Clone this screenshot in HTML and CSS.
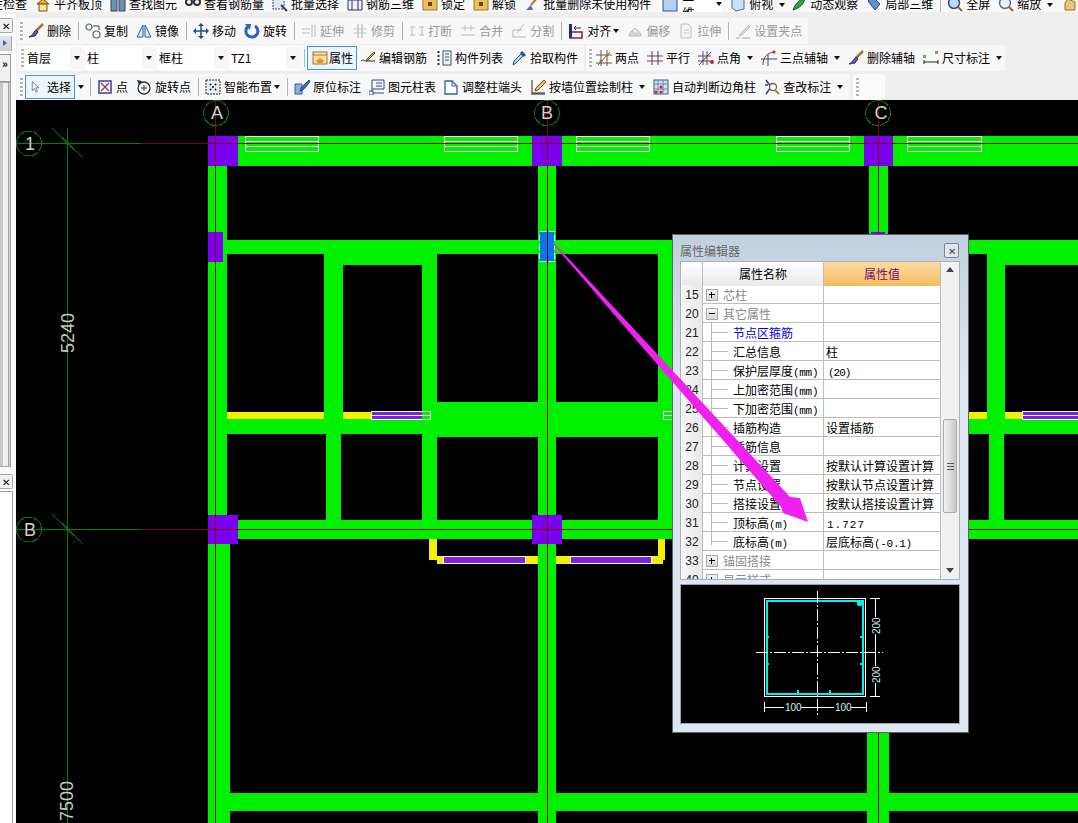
FILE: index.html
```html
<!DOCTYPE html>
<html lang="zh">
<head>
<meta charset="utf-8">
<title>属性编辑器</title>
<link rel="stylesheet" href="styles.css">
</head>
<body>
<div class="page">
  <div class="tb-top">
    <div class="btn first"><span>合法性检查</span></div>
    <div class="btn"><svg class="ico" viewBox="0 0 16 16"><path d="M2 8l6-5 6 5z" fill="#e8b030" stroke="#805000"/><rect x="4" y="8" width="8" height="7" fill="#f5e6a0" stroke="#805000"/></svg><span>平齐板顶</span></div>
    <div class="btn"><svg class="ico" viewBox="0 0 16 16"><rect x="1" y="2" width="6" height="13" fill="#7090b0" stroke="#345"/><rect x="9" y="2" width="6" height="13" fill="#7090b0" stroke="#345"/></svg><span>查找图元</span></div>
    <div class="btn"><svg class="ico" viewBox="0 0 16 16"><circle cx="4" cy="6" r="3" fill="none" stroke="#333" stroke-width="2"/><circle cx="12" cy="6" r="3" fill="none" stroke="#333" stroke-width="2"/></svg><span>查看钢筋量</span></div>
    <div class="btn"><svg class="ico" viewBox="0 0 16 16"><rect x="1" y="1" width="11" height="12" fill="#dde8f5" stroke="#345" stroke-dasharray="2 1"/><path d="M9 9l6 6" stroke="#345" stroke-width="2"/></svg><span>批量选择</span></div>
    <div class="btn"><svg class="ico" viewBox="0 0 16 16"><path d="M1 4h14v10H1zM5 4v10M11 4v10" fill="#eef" stroke="#335"/></svg><span>钢筋三维</span></div>
    <div class="btn"><svg class="ico" viewBox="0 0 16 16"><rect x="1" y="2" width="14" height="12" fill="#e8c060" stroke="#a07820"/><rect x="6" y="6" width="4" height="4" fill="#704000"/></svg><span>锁定</span></div>
    <div class="btn"><svg class="ico" viewBox="0 0 16 16"><rect x="1" y="2" width="14" height="12" fill="#e8c060" stroke="#a07820"/><rect x="6" y="6" width="4" height="4" fill="#704000"/></svg><span>解锁</span></div>
    <div class="btn"><svg class="ico" viewBox="0 0 16 16"><path d="M14 1L7 9" stroke="#c07030" stroke-width="2"/><path d="M7 9l-5 5h7z" fill="#6060c0"/></svg><span>批量删除未使用构件</span></div>
    <div class="view-box"><svg class="ico" viewBox="0 0 16 16"><rect x="1" y="1" width="14" height="14" fill="#b8d0f0" stroke="#2050a0"/></svg><span>二维</span><i class="dd"></i></div>
    <div class="btn"><svg class="ico" viewBox="0 0 16 16"><path d="M2 4l8-3 4 3v9l-8 2-4-3z" fill="#cfe0f5" stroke="#4070a0"/></svg><span>俯视</span></div><i class="dd dd-top"></i>
    <div class="btn"><svg class="ico" viewBox="0 0 16 16"><path d="M2 14c2-6 6-10 12-12-1 6-5 10-12 12z" fill="#30a040" stroke="#106020"/></svg><span>动态观察</span></div>
    <div class="btn"><svg class="ico" viewBox="0 0 16 16"><path d="M2 5l5-4 7 7-5 6z" fill="#6090d0" stroke="#204080"/></svg><span>局部三维</span></div>
    <i class="sep"></i>
    <div class="btn"><svg class="ico" viewBox="0 0 16 16"><circle cx="7" cy="7" r="5.5" fill="#bcd8f0" stroke="#305080" stroke-width="1.5"/><path d="M11 11l4 4" stroke="#a06020" stroke-width="2"/></svg><span>全屏</span></div>
    <div class="btn"><svg class="ico" viewBox="0 0 16 16"><circle cx="7" cy="7" r="5.5" fill="#e8f0f8" stroke="#607090" stroke-width="1.5"/><path d="M11 11l4 4" stroke="#a06020" stroke-width="2"/></svg><span>缩放</span></div><i class="dd dd-top"></i>
    <svg class="ico hand" viewBox="0 0 16 16"><path d="M3 14V7l3-4 7 3v8z" fill="#e8c878" stroke="#907030"/></svg>
  </div>

  <div class="work">
    <aside class="side">
      <div class="side-x">✕</div>
      <div class="side-arrow"></div>
      <div class="side-more">»</div>
      <div class="side-panel"></div>
      <div class="side-x lower">✕</div>
      <div class="side-white"></div>
    </aside>

    <main class="main">
      <div class="tb tb-1">
        <i class="grip"></i>
        <div class="btn"><svg class="ico" viewBox="0 0 16 16"><path d="M15 1L8 8" stroke="#b06a30" stroke-width="2.5"/><path d="M8 7l2 2-3 4-6 1c3-1 4-4 7-7z" fill="#5a5ab0" stroke="#336"/></svg><span>删除</span></div>
        <i class="sep"></i>
        <div class="btn"><svg class="ico" viewBox="0 0 16 16"><circle cx="4" cy="4" r="3" fill="none" stroke="#567" stroke-width="1.2"/><circle cx="11.500" cy="11.500" r="3.500" fill="none" stroke="#567" stroke-width="1.2"/><path d="M8 3h6v4" fill="none" stroke="#345"/></svg><span>复制</span></div>
        <div class="btn"><svg class="ico" viewBox="0 0 16 16"><path d="M1 14L7 2v12zM15 14L9 2v12z" fill="#dfe9f7" stroke="#2858a0"/></svg><span>镜像</span></div>
        <i class="sep"></i>
        <div class="btn"><svg class="ico" viewBox="0 0 16 16"><path d="M8 1v14M1 8h14" stroke="#204f88" stroke-width="1.500"/><path d="M8 0l3 3H5zM8 16l3-3H5zM0 8l3-3v6zM16 8l-3-3v6z" fill="#204f88"/></svg><span>移动</span></div>
        <div class="btn"><svg class="ico" viewBox="0 0 16 16"><path d="M4 3.500a6 6 0 1 0 7-.5" fill="none" stroke="#2a62c8" stroke-width="3"/><path d="M1 1l6 0-1 6z" fill="#2a62c8"/></svg><span>旋转</span></div>
        <i class="sep"></i>
        <div class="btn off"><svg class="ico" viewBox="0 0 16 16"><path d="M1 6h8M1 10h8M11 2v12M14 2v12" stroke="#bbb" fill="none"/></svg><span>延伸</span></div>
        <div class="btn off"><svg class="ico" viewBox="0 0 16 16"><path d="M1 6h14M1 10h14" stroke="#ccc"/><path d="M6 1v14M10 1v14" stroke="#aaa"/></svg><span>修剪</span></div>
        <i class="sep"></i>
        <div class="btn off"><svg class="ico" viewBox="0 0 16 16"><path d="M1 4h5M10 4h5M1 12h5M10 12h5M3 4v8M13 4v8" stroke="#b5c0b5" fill="none"/></svg><span>打断</span></div>
        <div class="btn off"><svg class="ico" viewBox="0 0 16 16"><path d="M1 5h14M1 12h14M5 2v6M11 2v6" stroke="#b5c0b5" fill="none"/></svg><span>合并</span></div>
        <div class="btn off"><svg class="ico" viewBox="0 0 16 16"><path d="M1 14h14M2 14V7h9M13 1L6 10" stroke="#bbb" fill="none"/></svg><span>分割</span></div>
        <i class="sep"></i>
        <div class="btn"><svg class="ico" viewBox="0 0 16 16"><rect x="2" y="9" width="12" height="6" fill="#fff" stroke="#a01818" stroke-width="1.500"/><path d="M2.500 1v14" stroke="#1a2f90" stroke-width="3"/><path d="M13 5H6M8 3L6 5l2 2" stroke="#1a2f90" fill="none"/></svg><span>对齐</span><i class="dd"></i></div>
        <div class="btn off"><svg class="ico" viewBox="0 0 16 16"><path d="M2 13a6 6 0 1 1 12 0z" fill="#d8d8d8" stroke="#bbb"/><circle cx="8" cy="8" r="2.500" fill="#f5f5f5" stroke="#bbb"/></svg><span>偏移</span></div>
        <div class="btn off"><svg class="ico" viewBox="0 0 16 16"><path d="M3 1h7l3 3v11H3z" fill="#f5f5f5" stroke="#c0c0c0"/><path d="M6 7h5M6 10h5" stroke="#ccc"/></svg><span>拉伸</span></div>
        <i class="sep"></i>
        <div class="btn off"><svg class="ico" viewBox="0 0 16 16"><path d="M1 15h4M7 15h8" stroke="#aaa"/><path d="M14 2L6 10l-2 3 3-1 8-8z" fill="#ddd" stroke="#bbb"/></svg><span>设置夹点</span></div>
      </div>

      <div class="row-2">
        <div class="tb tb-2a">
          <i class="grip"></i>
          <div class="combo c1"><span>首层</span><b class="combo-arrow"><i class="dd"></i></b></div>
          <div class="combo c2"><span>柱</span><b class="combo-arrow"><i class="dd"></i></b></div>
          <div class="combo c2"><span>框柱</span><b class="combo-arrow"><i class="dd"></i></b></div>
          <div class="combo c2"><span>TZ1</span><b class="combo-arrow"><i class="dd"></i></b></div>
          <i class="sep s2"></i>
          <div class="btn on prop"><svg class="ico" viewBox="0 0 16 16"><rect x="1" y="2" width="14" height="12" fill="#f8e0a8" stroke="#b07020"/><path d="M1 5h14" stroke="#b07020"/><path d="M4 11l4-3 4 3-2 2H6z" fill="#e89020"/></svg><span>属性</span></div>
          <div class="btn tight"><svg class="ico" viewBox="0 0 16 16"><path d="M1 11c2-2 3 0 5 0h9" fill="none" stroke="#222"/><path d="M14 2L7 9l-1 2 2-1 7-7z" fill="#f0c050" stroke="#704010"/></svg><span>编辑钢筋</span></div>
          <div class="btn"><svg class="ico" viewBox="0 0 16 16"><path d="M1.500 2h3M1.500 6h3M1.500 10h3M1.500 14h3" stroke="#234" stroke-width="2" stroke-dasharray="2 1"/><rect x="7" y="1" width="8" height="14" fill="#e8f0fa" stroke="#456"/><path d="M9 4h4M9 7h4M9 10h4" stroke="#456"/></svg><span>构件列表</span></div>
          <div class="btn"><svg class="ico" viewBox="0 0 16 16"><path d="M2 15l1-4 7-7 2 2-7 7z" fill="#bcd8f5" stroke="#2050a0"/><path d="M9 3l2-2 4 4-2 2z" fill="#2050a0"/></svg><span>拾取构件</span></div>
        </div>
        <div class="tb tb-2b">
          <i class="grip"></i>
          <div class="btn"><svg class="ico" viewBox="0 0 16 16"><path d="M0 13h16M0 5h16M5 0v16M11 0v16" stroke="#9a4050" fill="none"/><path d="M2 15L14 2" stroke="#208020"/><circle cx="5" cy="11" r="1.500" fill="#40a040"/><circle cx="11" cy="5" r="1.500" fill="#40a040"/></svg><span>两点</span></div>
          <div class="btn"><svg class="ico" viewBox="0 0 16 16"><path d="M0 6h16M0 11h16" stroke="#a83040"/><path d="M5 1v14M11 1v14" stroke="#30458a"/></svg><span>平行</span></div>
          <div class="btn"><svg class="ico" viewBox="0 0 16 16"><path d="M0 6h13M0 11h13M5 1v14M9 1v14" stroke="#405080"/><path d="M1 15L13 2" stroke="#a02020"/><circle cx="14" cy="12" r="2" fill="#d02020"/></svg><span>点角</span><i class="dd d7"></i></div>
          <div class="btn"><svg class="ico" viewBox="0 0 16 16"><path d="M2 15C2 7 6 3 13 2" fill="none" stroke="#c02020"/><path d="M0 9h16M7 4v12" stroke="#304880"/><circle cx="13" cy="2" r="1.500" fill="#c02020"/></svg><span>三点辅轴</span><i class="dd d7"></i></div>
          <div class="btn"><svg class="ico" viewBox="0 0 16 16"><path d="M15 1L8 8" stroke="#b06a30" stroke-width="2.500"/><path d="M8 7l2 2-3 4-6 1c3-1 4-4 7-7z" fill="#5a5ab0" stroke="#336"/></svg><span>删除辅轴</span></div>
          <div class="btn"><svg class="ico" viewBox="0 0 16 16"><path d="M1 12h14M1 10v4M15 10v4" stroke="#222" fill="none"/><rect x="0" y="5" width="3" height="3" fill="#50c050"/><rect x="12" y="1" width="3" height="3" fill="#50c050"/></svg><span>尺寸标注</span><i class="dd d7"></i></div>
        </div>
      </div>

      <div class="row-3">
        <div class="tb tb-3">
          <i class="grip"></i>
          <div class="btn on pick"><svg class="ico" viewBox="0 0 16 16"><path d="M3 1v12l3-3 2 5 2-1-2-5h4z" fill="#f0f4fa" stroke="#5a6a8a"/></svg><span>选择</span></div>
          <i class="dd d-pick"></i>
          <i class="sep s3"></i>
          <div class="btn"><svg class="ico" viewBox="0 0 16 16"><rect x="2" y="2" width="12" height="12" fill="#fff" stroke="#3040a0" stroke-width="1.500"/><path d="M4 4l8 8M12 4l-8 8" stroke="#c02030" stroke-width="1.200"/></svg><span>点</span></div>
          <div class="btn"><svg class="ico" viewBox="0 0 16 16"><circle cx="8" cy="9" r="6" fill="none" stroke="#234" stroke-width="1.300"/><path d="M8 6v6M5 9h6" stroke="#234"/><path d="M1 1l5 1-3 4z" fill="#234"/></svg><span>旋转点</span></div>
          <i class="sep"></i>
          <div class="btn"><svg class="ico" viewBox="0 0 16 16"><rect x="1" y="1" width="14" height="14" fill="#e8eef5" stroke="#222" stroke-dasharray="2 1"/><path d="M5 5h1v1H5zM10 5h1v1h-1zM5 10h1v1H5zM10 10h1v1h-1zM7.500 7.500h1v1h-1z" stroke="#123"/></svg><span>智能布置</span><i class="dd"></i></div>
          <i class="sep"></i>
          <div class="btn"><svg class="ico" viewBox="0 0 16 16"><path d="M1 5l7 0v10H1z" fill="#8ab0dc" stroke="#385f90"/><path d="M15 1L7 9l-1 3 3-1 7-8z" fill="#3a70c0" stroke="#204880"/></svg><span>原位标注</span></div>
          <div class="btn"><svg class="ico" viewBox="0 0 16 16"><path d="M3 1v13M3 14h12M3 1h12v9H3" fill="#f4f7fb" stroke="#2a4a90"/><rect x="0" y="12" width="4" height="4" fill="#fff" stroke="#2a4a90"/><path d="M7 4h6M7 7h6" stroke="#2a4a90"/></svg><span>图元柱表</span></div>
          <div class="btn snug"><svg class="ico" viewBox="0 0 16 16"><path d="M2 2h7l5 5v8H2z" fill="#fff" stroke="#3060a0" stroke-width="1.300"/><path d="M9 2v5h5" fill="none" stroke="#3060a0"/></svg><span>调整柱端头</span></div>
          <div class="btn"><svg class="ico" viewBox="0 0 16 16"><path d="M2 1v13h13" stroke="#223" fill="none"/><path d="M14 1L6 9l-1 3 3-1 8-8z" fill="#e8c060" stroke="#805010"/><path d="M1 15h14" stroke="#223"/></svg><span>按墙位置绘制柱</span><i class="dd d7"></i></div>
          <div class="btn"><svg class="ico" viewBox="0 0 16 16"><rect x="1" y="1" width="14" height="14" fill="#cfe0f4" stroke="#3a5a8a"/><path d="M1 5h14M1 10h14M5 1v14M10 1v14" stroke="#6a88b0"/><circle cx="3" cy="13" r="1.500" fill="#d02020"/><circle cx="8" cy="13" r="1.500" fill="#d02020"/><circle cx="8" cy="8" r="1.500" fill="#d02020"/></svg><span>自动判断边角柱</span></div>
          <div class="btn"><svg class="ico" viewBox="0 0 16 16"><path d="M2 1l5 7-5 7M1 6h3" stroke="#2040a0" fill="none" stroke-width="1.500"/><circle cx="9" cy="8" r="3.500" fill="#fff" stroke="#806030" stroke-width="1.300"/><path d="M11 11l4 4" stroke="#b08030" stroke-width="2"/></svg><span>查改标注</span><i class="dd d7"></i></div>
        </div>
        <div class="tb tb-3b"><i class="grip"></i></div>
      </div>

      <svg class="cad" viewBox="16 100 1062 723" role="img" aria-label="柱平面图">
        <g class="green">
          <rect x="208" y="136" width="870" height="30"/>
          <rect x="208" y="166" width="19" height="354"/>
          <rect x="208" y="539" width="22" height="284"/>
          <rect x="227" y="240" width="851" height="14"/>
          <rect x="1005" y="254" width="73" height="11"/>
          <rect x="343" y="254" width="79" height="11"/>
          <rect x="324" y="254" width="19" height="165"/>
          <rect x="422" y="254" width="15" height="266"/>
          <rect x="538" y="166" width="18" height="657"/>
          <rect x="658" y="254" width="20" height="266"/>
          <rect x="437" y="402" width="241" height="35"/>
          <rect x="227" y="419" width="195" height="15"/>
          <rect x="343" y="412" width="79" height="7"/>
          <rect x="326" y="434" width="15" height="86"/>
          <rect x="987" y="254" width="18" height="165"/>
          <rect x="969" y="419" width="109" height="15"/>
          <rect x="989" y="434" width="15" height="86"/>
          <rect x="208" y="520" width="870" height="19"/>
          <rect x="230" y="793" width="848" height="18"/>
          <rect x="869" y="166" width="19" height="70"/>
          <rect x="867" y="733" width="22" height="90"/>
        </g>
        <g class="yellow">
          <rect x="227" y="412" width="97" height="7"/>
          <rect x="343" y="412" width="28" height="7"/>
          <rect x="969" y="412" width="18" height="7"/>
          <rect x="1005" y="412" width="17" height="7"/>
          <rect x="429" y="539" width="8" height="21"/>
          <rect x="437" y="556" width="101" height="8"/>
          <rect x="658" y="539" width="7" height="21"/>
          <rect x="556" y="556" width="107" height="8"/>
        </g>
        <g class="purple">
          <rect x="208" y="136" width="30" height="30"/>
          <rect x="208" y="232" width="15" height="30"/>
          <rect x="532" y="136" width="30" height="30"/>
          <rect x="864" y="136" width="29" height="30"/>
          <rect x="208" y="515" width="30" height="29"/>
          <rect x="532" y="515" width="30" height="29"/>
          <rect x="871" y="232" width="14" height="4"/>
        </g>
        <g class="win-top">
          <path d="M245.500 136.500h73v15h-73zM245.500 141.500h73M245.500 146.500h73"/>
          <path d="M444.500 136.500h73v15h-73zM444.500 141.500h73M444.500 146.500h73"/>
          <path d="M576.500 136.500h73v15h-73zM576.500 141.500h73M576.500 146.500h73"/>
          <path d="M776.500 136.500h73v15h-73zM776.500 141.500h73M776.500 146.500h73"/>
          <path d="M907.500 136.500h74v15h-74zM907.500 141.500h74M907.500 146.500h74"/>
        </g>
        <g class="win-fill">
          <rect x="371" y="411" width="51" height="9"/>
          <rect x="1022" y="411" width="56" height="9"/>
          <rect x="443" y="556" width="83" height="8"/>
          <rect x="570" y="556" width="82" height="8"/>
        </g>
        <g class="win-top">
          <path d="M371.500 411.500h59v8h-59zM371.500 415.500h59"/>
          <path d="M663.500 411.500h12v8h-12zM663.500 415.500h12"/>
          <path d="M1022.500 411.500h56v8h-56zM1022.500 415.500h56"/>
          <path d="M443.500 556.500h82v7h-82z"/>
          <path d="M570.500 556.500h81v7h-81z"/>
        </g>
        <rect class="selected" x="540" y="232" width="14" height="29"/>
        <path class="selected-edge" d="M539.500 231.500h15v30h-15z"/>
        <g class="axis-green">
          <path d="M16 143.500h125M16 529.500h125M67.500 128V823M52 128l31 30M52 514l31 30"/>
        </g>
        <g class="axis-red">
          <path d="M141 143.500h937M141 529.500h937M215.500 100V823M547.500 100V823M878.500 100V823"/>
        </g>
        <g class="bubble">
          <circle cx="29" cy="143.500" r="12.500"/>
          <circle cx="29" cy="529.500" r="12.500"/>
          <circle cx="216" cy="113" r="12.500"/>
          <circle cx="547" cy="113" r="12.500"/>
          <circle cx="878" cy="113" r="12.500"/>
        </g>
        <g class="axis-label">
          <text x="30" y="150">1</text>
          <text x="30" y="536">B</text>
          <text x="217" y="119">A</text>
          <text x="547" y="119">B</text>
          <text x="881" y="119">C</text>
        </g>
        <text class="dim" transform="translate(74 353) rotate(-90)">5240</text>
        <text class="dim" transform="translate(73 821) rotate(-90)">7500</text>
      </svg>
    </main>
  </div>

  <section class="dialog">
    <header class="dlg-title"><span>属性编辑器</span><b class="dlg-close">✕</b></header>
    <div class="grid">
      <div class="rows">
        <div class="row head"><div class="num"></div><div class="name">属性名称</div><div class="val">属性值</div></div>
        <div class="row"><div class="num">15</div><div class="name grp"><i class="box plus"></i>芯柱</div><div class="val"></div></div>
        <div class="row"><div class="num">20</div><div class="name grp"><i class="box minus"></i>其它属性</div><div class="val"></div></div>
        <div class="row"><div class="num">21</div><div class="name leaf link">节点区箍筋</div><div class="val"></div></div>
        <div class="row"><div class="num">22</div><div class="name leaf">汇总信息</div><div class="val">柱</div></div>
        <div class="row"><div class="num">23</div><div class="name leaf">保护层厚度<small>(mm)</small></div><div class="val"><small class="inset">(20)</small></div></div>
        <div class="row"><div class="num">24</div><div class="name leaf">上加密范围<small>(mm)</small></div><div class="val"></div></div>
        <div class="row"><div class="num">25</div><div class="name leaf">下加密范围<small>(mm)</small></div><div class="val"></div></div>
        <div class="row"><div class="num">26</div><div class="name leaf">插筋构造</div><div class="val">设置插筋</div></div>
        <div class="row"><div class="num">27</div><div class="name leaf">插筋信息</div><div class="val"></div></div>
        <div class="row"><div class="num">28</div><div class="name leaf">计算设置</div><div class="val">按默认计算设置计算</div></div>
        <div class="row"><div class="num">29</div><div class="name leaf">节点设置</div><div class="val">按默认节点设置计算</div></div>
        <div class="row"><div class="num">30</div><div class="name leaf">搭接设置</div><div class="val">按默认搭接设置计算</div></div>
        <div class="row"><div class="num">31</div><div class="name leaf">顶标高<small>(m)</small></div><div class="val"><small class="spaced">1.727</small></div></div>
        <div class="row"><div class="num">32</div><div class="name leaf last">底标高<small>(m)</small></div><div class="val">层底标高<small>(-0.1)</small></div></div>
        <div class="row"><div class="num">33</div><div class="name grp"><i class="box plus"></i>锚固搭接</div><div class="val"></div></div>
        <div class="row"><div class="num">40</div><div class="name grp"><i class="box plus"></i>显示样式</div><div class="val"></div></div>
      </div>
      <div class="scroll">
        <i class="tri up"></i>
        <div class="thumb"><i></i></div>
        <i class="tri down"></i>
      </div>
    </div>
    <svg class="section" viewBox="680 584 280 140" role="img" aria-label="柱截面">
      <rect class="s-outer" x="764.500" y="598.500" width="101" height="98"/>
      <rect class="s-rebar" x="767" y="600.500" width="96" height="93"/>
      <path class="s-dots" d="M798 600v2M830 600v2M767 637h2M767 664h2M862 637h-2M862 664h-2M798 693v-3M830 693v-3"/>
      <circle class="s-corner" cx="859.500" cy="603.500" r="2.500"/>
      <path class="s-center" d="M817.500 591V715M756 652.500H883"/>
      <path class="s-dim" d="M870 598.500h10M870 696.500h10M875.500 598v19M875.500 634v32M875.500 683v14M764.500 702v10M866.500 702v10M764 707.500h20M801 707.500h33M851 707.500h15"/>
      <text class="s-txt" x="785" y="711">100</text>
      <text class="s-txt" x="835" y="711">100</text>
      <text class="s-txt" transform="translate(880 634) rotate(-90)">200</text>
      <text class="s-txt" transform="translate(880 683) rotate(-90)">200</text>
    </svg>
  </section>

  <svg class="leader" viewBox="0 0 1078 823" aria-hidden="true">
    <path d="M553 244L555 244L790 497L800 498L808 522L783 513L781 507Z"/>
  </svg>
</div>
</body>
</html>
```

FILE: styles.css
```css
* { box-sizing: border-box; }
html, body { margin: 0; padding: 0; background: #efefef; }
body { font: 12px/17px "Noto Sans CJK SC", "Liberation Sans", sans-serif; color: #000; }
small { font-size: 11px; font-family: "Liberation Mono", monospace; letter-spacing: -0.3px; }
small.inset { margin-left: 2px; letter-spacing: -1px; }
small.spaced { margin-left: 1px; letter-spacing: 1px; }
i { font-style: normal; }

.page { position: relative; width: 1078px; height: 823px; overflow: hidden; display: flex; flex-direction: column; }

/* toolbars */
.tb-top { height: 12px; flex: none; display: flex; align-items: flex-end; gap: 8px; overflow: hidden; background: #f8f8f8; margin-bottom: 2px; }
.tb-top .first { margin-left: -33px; }
.tb-top .sep { height: 12px; margin: 0 -2px 0 -1px; }
.tb-top .dd-top { margin: 0 -2px 5px -2px; flex: none; }
.tb-top .hand { margin-left: 3px; flex: none; }
.view-box { display: flex; align-items: center; gap: 4px; width: 62px; height: 17px; padding-left: 2px; background: #fff; flex: none; margin-left: 1px; }
.view-box .dd { margin-left: 7px; }

.work { flex: 1; display: flex; min-height: 0; }
.main { flex: 1; display: flex; flex-direction: column; min-width: 0; padding-top: 4px; }

.tb { display: flex; align-items: center; gap: 8px; background: #f8f8f8; border-radius: 2px; flex: none; }
.tb-1 { width: 791px; height: 26px; margin: 0 0 1px 1px; padding-left: 3px; }
.tb-1 .grip { margin-right: -3px; }
.row-2 { display: flex; height: 27px; gap: 2px; margin-left: 1px; flex: none; }
.tb-2a { width: 567px; height: 26px; padding-left: 4px; gap: 2px; }
.tb-2a .grip { margin-right: 1px; }
.tb-2b { width: 419px; height: 26px; padding-left: 3px; }
.tb-2b .grip { margin-right: -4px; }
.row-3 { display: flex; height: 26px; margin: 2px 0 0 1px; gap: 0; flex: none; }
.tb-3 { width: 833px; height: 26px; padding-left: 3px; }
.tb-3b { width: 32px; height: 26px; margin-left: 3px; padding-left: 3px; background: #fbfbfb; }

.btn { display: flex; align-items: center; gap: 3px; flex: none; height: 17px; white-space: nowrap; }
.tb .btn span, .combo span { padding-bottom: 2px; }
.btn.off { color: #9a9a9a; }
.ico { width: 16px; height: 16px; flex: none; display: block; }

.grip { width: 3px; height: 18px; flex: none; margin-right: -1px; background: repeating-linear-gradient(#b4b4b4 0 2px, transparent 2px 4px); }
.sep { width: 1px; height: 18px; background: #b5b5b5; flex: none; margin: 0 -2px 0 -1px; }
.s3 { margin-left: -2px; }
.dd { width: 0; height: 0; border: 3px solid transparent; border-top: 4px solid #111; border-bottom: 0; flex: none; display: block; }
.btn .dd { margin-left: -1px; }
.btn .d7 { margin-left: 3px; }
.d-pick { margin-left: -5px; }

.on { border: 1px solid #3c96f0; background: #eef6fd; }
.pick { height: 24px; width: 50px; padding-left: 4px; gap: 5px; margin-left: -5px; }
.pick .ico { width: 12px; height: 16px; }
.prop { height: 24px; width: 50px; padding-left: 4px; gap: 1px; margin: 0 1px 0 0; }
.tight { margin-right: 7px; }
.btn.tight + .btn { margin-right: 6px; }
.snug { margin-left: -1px; }

.combo { display: flex; align-items: center; justify-content: space-between; height: 24px; background: #fff; padding-left: 2px; flex: none; }
.c1 { width: 58px; margin-left: -2px; }
.c2 { width: 70px; }
.combo-arrow { width: 13px; height: 22px; background: #f6f6f6; display: flex; align-items: center; justify-content: center; }
.s2 { margin: 0 0 0 3px; }

/* side panel */
.side { width: 16px; flex: none; background: #fafafa; display: flex; flex-direction: column; padding-top: 4px; }
.side-x { width: 13px; height: 15px; border: 1px solid #a8a8a8; border-left: 0; border-radius: 0 2px 2px 0; background: #f0f0f0; font-size: 10px; line-height: 13px; text-align: center; flex: none; }
.side-arrow { width: 12px; height: 15px; margin-top: 3px; background: linear-gradient(#e4e4e4, #cfcfcf); border-right: 1px solid #aaa; flex: none; }
.side-arrow::after { content: ""; display: block; width: 0; height: 0; margin: 4px 0 0 3px; border: 3px solid transparent; border-left: 4px solid #4060c0; }
.side-more { width: 11px; height: 28px; margin-top: 3px; background: #f0f0f0; border: 1px solid #999; border-left: 0; font-size: 11px; font-weight: 700; line-height: 16px; text-align: center; flex: none; }
.side-panel { width: 11px; height: 385px; border: 1px solid #aaa; border-left: 0; border-right-width: 3px; border-right-style: double; background: linear-gradient(90deg, #c8c8c8 0 3px, #f0f0f0 3px); flex: none; }
.side-x.lower { margin-top: 7px; }
.side-white { flex: 1; width: 13px; margin-top: 2px; background: #fff; border-right: 1px solid #a0a0a0; border-top: 1px solid #a0a0a0; }

/* drawing */
.cad { display: block; width: 1062px; height: 723px; background: #000; flex: none; shape-rendering: crispEdges; }
.green { fill: #00f000; }
.yellow { fill: #f0f000; }
.purple { fill: #7a00f0; }
.win-fill { fill: #8020e0; }
.win-top path { fill: none; stroke: #fff; stroke-width: 1; }
.selected { fill: #0078f0; }
.selected-edge { fill: none; stroke: #fff; stroke-width: 1; stroke-dasharray: 6 3; }
.axis-green path { fill: none; stroke: #008000; stroke-width: 1; }
.axis-red path { fill: none; stroke: #880000; stroke-width: 1; }
.bubble circle { fill: none; stroke: #008000; stroke-width: 1; stroke-dasharray: 8 1; }
.axis-label text { fill: #d0d0d0; font: 18px "Liberation Sans", sans-serif; text-anchor: middle; shape-rendering: auto; }
.dim { fill: #c8c8c8; font: 18px "Liberation Sans", sans-serif; }

/* dialog */
.dialog { position: absolute; left: 672px; top: 234px; width: 297px; height: 499px; padding: 0 8px 8px 7px; border: 1px solid #5f6368; background: linear-gradient(#c2d0de, #dde7f2 30%); display: flex; flex-direction: column; gap: 4px; }
.dlg-title { height: 26px; margin-bottom: -4px; display: flex; align-items: center; justify-content: space-between; color: #666; flex: none; padding-top: 4px; }
.dlg-close { width: 15px; height: 15px; margin-right: 1px; border: 1px solid #7b8696; border-radius: 2px; background: #dfe6ee; color: #444; font-size: 10px; font-weight: 400; line-height: 13px; text-align: center; }
.grid { height: 319px; flex: none; display: flex; border: 1px solid #a8b0b8; background: #fff; overflow: hidden; }
.rows { width: 260px; flex: none; padding-left: 1px; }
.row { display: grid; grid-template-columns: 21px 121px 117px; height: 19px; border-bottom: 1px solid #bdbdbd; line-height: 20px; }
.row.head { height: 23px; line-height: 24px; text-align: center; }
.num { background: linear-gradient(90deg, #f6f6f6, #e8e8e8); border-right: 1px solid #bdbdbd; text-align: center; font: 12px/20px "Liberation Sans", sans-serif; color: #222; }
.head .num { background: linear-gradient(#fff, #e9e9e9); }
.name { position: relative; border-right: 1px solid #bdbdbd; padding-left: 30px; white-space: nowrap; }
.val { border-right: 1px solid #bdbdbd; padding-left: 2px; white-space: nowrap; overflow: hidden; }
.head .name { padding: 0; background: linear-gradient(#fff, #e9e9e9); }
.head .val { padding: 0; background: linear-gradient(#fbdca2, #f2bd62); color: #7a0f70; }
.name.grp { color: #8a8a8a; padding-left: 20px; display: flex; align-items: center; gap: 5px; }
.box { width: 12px; height: 12px; margin-left: -17px; border: 1px solid #aaa; background: linear-gradient(#f4f4f4, #d8d8d8); position: relative; flex: none; }
.box::before { content: ""; position: absolute; left: 2px; right: 2px; top: 4px; height: 1px; background: #000; }
.plus::after { content: ""; position: absolute; top: 2px; bottom: 2px; left: 4px; width: 1px; background: #000; }
.leaf::before { content: ""; position: absolute; left: 8px; top: -1px; bottom: -1px; width: 1px; background: #b8b8b8; }
.leaf.last::before { bottom: 9px; }
.leaf::after { content: ""; position: absolute; left: 8px; top: 9px; width: 17px; height: 1px; background: #b8b8b8; }
.link { color: #0000e0; }
.scroll { flex: 1; background: #f1f1f1; display: flex; flex-direction: column; align-items: center; }
.tri { width: 0; height: 0; border: 4px solid transparent; flex: none; }
.tri.up { margin-top: 5px; border-bottom: 5px solid #444; border-top: 0; }
.tri.down { margin-top: 55px; border-top: 5px solid #444; border-bottom: 0; }
.thumb { width: 14px; height: 94px; margin-top: 147px; border: 1px solid #aaa; border-radius: 2px; background: linear-gradient(90deg, #f2f2f2, #c8c8c8); display: flex; align-items: center; justify-content: center; flex: none; }
.thumb i { display: block; width: 7px; height: 7px; background: repeating-linear-gradient(#555 0 1px, transparent 1px 3px); }

.section { display: block; width: 280px; height: 140px; flex: none; background: #000; outline: 1px solid #9aa5b0; outline-offset: -1px; shape-rendering: crispEdges; }
.s-outer { fill: none; stroke: #fff; }
.s-rebar { fill: none; stroke: #00f0f0; stroke-width: 2; }
.s-dots { fill: none; stroke: #00f0f0; stroke-width: 2; }
.s-corner { fill: #00f0f0; }
.s-center { fill: none; stroke: #fff; stroke-dasharray: 12 2 2 2; }
.s-dim { fill: none; stroke: #fff; }
.s-txt { fill: #c8f0f0; font: 10px "Liberation Sans", sans-serif; shape-rendering: auto; }

.leader { position: absolute; left: 0; top: 0; width: 1078px; height: 823px; pointer-events: none; }
.leader path { fill: #f020f0; }
```
